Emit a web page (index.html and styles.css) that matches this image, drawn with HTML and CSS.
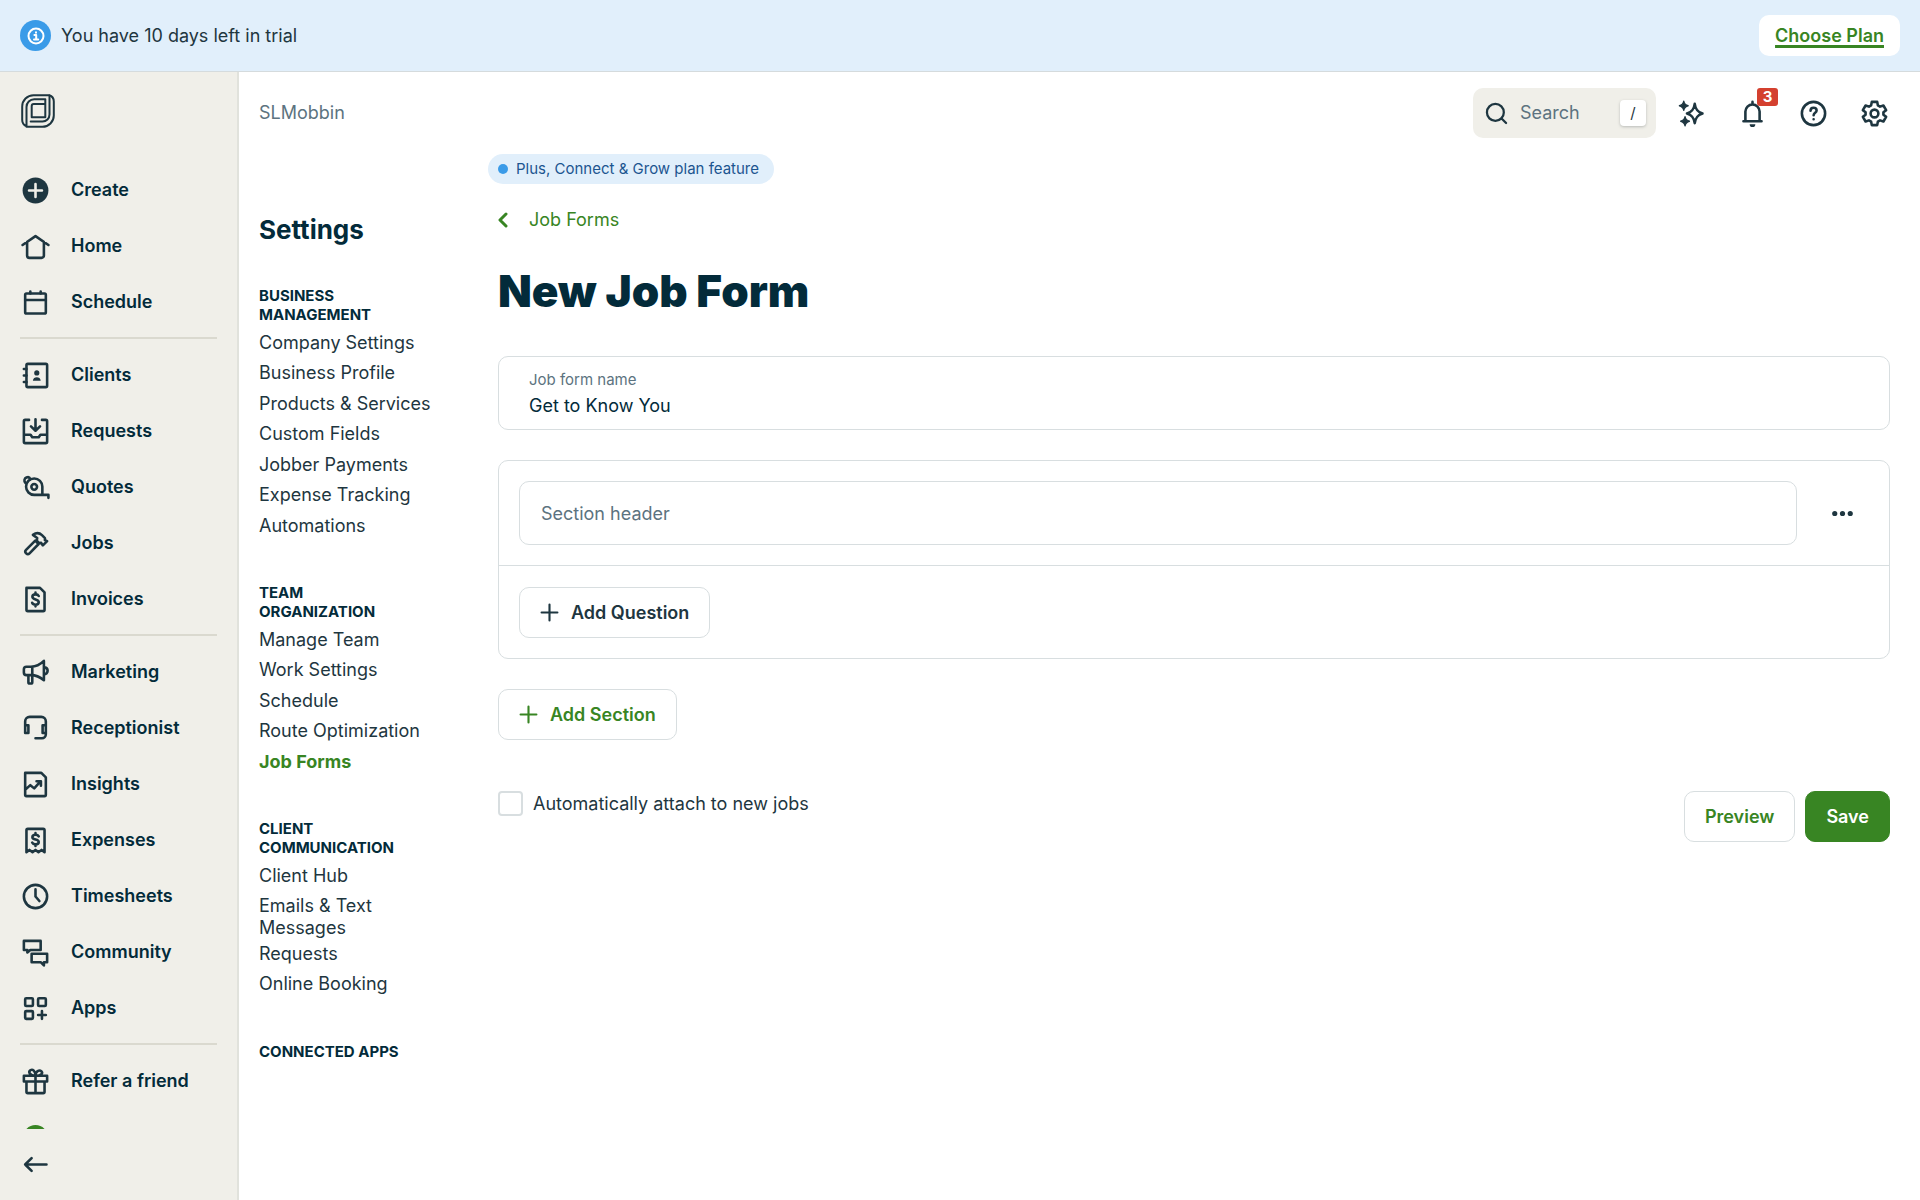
FILE: index.html
```html
<!DOCTYPE html>
<html lang="en">

<head>
  <meta charset="utf-8">
  <meta name="viewport" content="width=device-width, initial-scale=1">
  <title>New Job Form</title>
  <link rel="stylesheet" href="styles.css">
</head>

<body>

  <div class="trial-banner">
    <span class="trial-icon">
      <svg viewBox="0 0 18 18"><circle cx="9" cy="9" r="7.5"/><path d="M7.4 8h1.8v4.6M7 12.6h4.2"/><path d="M9 5.2v.6"/></svg>
    </span>
    <p class="trial-text">You have 10 days left in trial</p>
    <a class="trial-plan" href="#">Choose Plan</a>
  </div>

  <div class="app">

    <aside class="sidebar">
      <a class="logo" href="#" aria-label="Dashboard">
        <svg viewBox="0 0 34 34">
          <path d="M5.5 32.3C2.5 31 1.2 29 1.2 26V12.500A11.300 11.300 0 0 1 12.500 1.200H28.200C31 2 32.800 4 32.800 7.500V21.500A11.300 11.300 0 0 1 21.500 32.800H5.500V13A7.700 7.700 0 0 1 13.200 5.300H24.300V23.300H10.700V12A2 2 0 0 1 12.700 10H24"/>
          <path d="M28.500 1.500V20.500A7 7 0 0 1 21.500 27.500H9.700"/>
        </svg>
      </a>

      <nav class="menu">
        <a class="menu-item" href="#">
          <svg class="icon" viewBox="0 0 24 24"><circle class="solid" cx="12" cy="12" r="10"/><path class="plus-cut" d="M12 7v10M7 12h10"/></svg>
          Create
        </a>
        <a class="menu-item" href="#">
          <svg class="icon" viewBox="0 0 24 24"><path d="M2 10.800L12 4l10 6.800M5.500 8.600V19a1.800 1.800 0 0 0 1.800 1.800h9.400a1.800 1.800 0 0 0 1.800-1.800V8.600"/></svg>
          Home
        </a>
        <a class="menu-item" href="#">
          <svg class="icon" viewBox="0 0 24 24"><rect x="4" y="5" width="16" height="15.500" rx="1"/><path d="M4 10h16M8 3.500V5M16 3.500V5"/></svg>
          Schedule
        </a>
        <hr class="menu-line">
        <a class="menu-item" href="#">
          <svg class="icon" viewBox="0 0 24 24"><rect x="5" y="3" width="16" height="18" rx="1"/><path d="M3 7h2M3 12h2M3 17h2"/><circle class="solid" cx="13" cy="10" r="2"/><path class="solid" d="M10 16c0-3.500 6-3.500 6 0z"/></svg>
          Clients
        </a>
        <a class="menu-item" href="#">
          <svg class="icon" viewBox="0 0 24 24"><path d="M7 3H4a1 1 0 0 0-1 1v16a1 1 0 0 0 1 1h16a1 1 0 0 0 1-1V4a1 1 0 0 0-1-1h-3M12 2.500V11M8.500 8l3.500 3.400L15.500 8M3 14.500h5.200l1.300 2h5l1.300-2H21"/></svg>
          Requests
        </a>
        <a class="menu-item" href="#">
          <svg class="icon" viewBox="0 0 24 24"><path d="M22 20v-2.300H11a6.300 6.300 0 0 1-6.300-6.300C4.700 7.500 7.500 5 11 5a6.300 6.300 0 0 1 6.300 6.300v6"/><circle cx="11" cy="11.500" r="2.200"/><path d="M4.300 8.500C2.800 7 3.300 5 5 4.300c1.200-.5 2.500 0 3 1.200"/></svg>
          Quotes
        </a>
        <a class="menu-item" href="#">
          <svg class="icon" viewBox="0 0 24 24"><path d="M11.800 9.800l2.600 2.600-7 7.200a1.850 1.850 0 0 1-2.700-2.600zM10 5.300C12.500 3.500 15 3.600 17 5.500l2.300 2.300v1.600l1.700.8-3.300 3.300-1.300-2-1.600.2-1.800-1.800.3-2.200z"/></svg>
          Jobs
        </a>
        <a class="menu-item" href="#">
          <svg class="icon" viewBox="0 0 24 24"><path d="M5 3h10.500L19 6.500V20a1 1 0 0 1-1 1H6a1 1 0 0 1-1-1zM14.500 9.300c-.5-1-1.400-1.300-2.500-1.300-1.300 0-2.400.6-2.400 1.900 0 2.700 4.900 1.400 4.900 4.100 0 1.300-1.100 2-2.500 2-1.200 0-2.200-.5-2.600-1.500M12 6.700V8M12 16v1.300"/></svg>
          Invoices
        </a>
        <hr class="menu-line">
        <a class="menu-item" href="#">
          <svg class="icon" viewBox="0 0 24 24"><path d="M8.500 7.500H5a2 2 0 0 0-2 2V12a2 2 0 0 0 2 2h3.500c4 0 7 1.500 10 4V3c-3 3-6 4.500-10 4.500zM9.500 7.500V14M6.500 14v5.500a1 1 0 0 0 1 1h1a1 1 0 0 0 1-1V14M18.500 8c1.800 0 2.900 1.200 2.900 2.700s-1.100 2.800-2.900 2.800"/></svg>
          Marketing
        </a>
        <a class="menu-item" href="#">
          <svg class="icon" viewBox="0 0 24 24"><path d="M4 15.500V6.500a3.500 3.500 0 0 1 3.500-3.500h9A3.500 3.500 0 0 1 20 6.500v10a3 3 0 0 1-3 3h-5M4 9.500h2.500v6H4M20 9.500h-2.500v6H20"/></svg>
          Receptionist
        </a>
        <a class="menu-item" href="#">
          <svg class="icon" viewBox="0 0 24 24"><path d="M4 3h12.500L20 6.500V20a1 1 0 0 1-1 1H5a1 1 0 0 1-1-1zM4 16l4-3.500 3 2.500 4.500-5M12.800 9.500h3.400V13"/></svg>
          Insights
        </a>
        <a class="menu-item" href="#">
          <svg class="icon" viewBox="0 0 24 24"><path d="M5 21V4a1 1 0 0 1 1-1h12a1 1 0 0 1 1 1v17l-2.300-1.700L14.300 21 12 19.300 9.700 21l-2.400-1.700zM14.500 8.800c-.5-1-1.400-1.300-2.500-1.300-1.300 0-2.400.6-2.400 1.900 0 2.500 4.900 1.200 4.900 3.700 0 1.300-1.100 1.900-2.500 1.900-1.200 0-2.200-.5-2.600-1.400M12 6.300v1.200M12 15v1.200"/></svg>
          Expenses
        </a>
        <a class="menu-item" href="#">
          <svg class="icon" viewBox="0 0 24 24"><circle cx="12" cy="12" r="9"/><path d="M12 6.500V12l3 3.500"/></svg>
          Timesheets
        </a>
        <a class="menu-item" href="#">
          <svg class="icon" viewBox="0 0 24 24"><path d="M3 3h13v7h-8l-2.300 2V10H3zM9 13h12v6.500h-2.500V22l-2.500-2.500H9z"/></svg>
          Community
        </a>
        <a class="menu-item" href="#">
          <svg class="icon" viewBox="0 0 24 24"><rect x="4" y="4" width="6" height="6" rx=".8"/><rect x="14" y="4" width="6" height="6" rx=".8"/><rect x="4" y="14" width="6" height="6" rx=".8"/><path d="M17 14v6M14 17h6"/></svg>
          Apps
        </a>
        <hr class="menu-line">
        <a class="menu-item" href="#">
          <svg class="icon" viewBox="0 0 24 24"><path d="M3 7.500h18V12H3zM5 12v8a1 1 0 0 0 1 1h12a1 1 0 0 0 1-1v-8M12 7.500V21M12 7.500C7 7.500 6.500 4.500 8 3.300c1.800-1.200 4 .5 4 4.200zM12 7.500c5 0 5.800-2.300 4.500-3.500C15 2.800 12 4 12 7.500z"/></svg>
          Refer a friend
        </a>
        <a class="menu-item" href="#" aria-label="Profile"><span class="avatar"></span></a>
      </nav>

      <button class="collapse" type="button" aria-label="Collapse menu">
        <svg class="icon" viewBox="0 0 24 24"><path d="M20.500 12H4M9 7l-5 5 5 5"/></svg>
      </button>
    </aside>

    <div class="page">

      <header class="topbar">
        <span class="account">SLMobbin</span>
        <label class="search">
          <svg class="icon" viewBox="0 0 24 24"><circle cx="11" cy="11" r="7.500"/><path d="M16.500 16.500L20.500 20.500"/></svg>
          <input type="text" placeholder="Search" aria-label="Search">
          <kbd>/</kbd>
        </label>
        <div class="tools">
          <button type="button" aria-label="Assistant">
            <svg class="icon" viewBox="0 0 24 24"><path d="M14.500 4.500c.6 4.200 2 6.200 6 7.500-4 1.300-5.400 3.300-6 7.500-.6-4.200-2-6.200-6-7.500 4-1.300 5.400-3.300 6-7.500z"/><path class="solid spark" d="M6 2.500c.4 2.200 1.200 3 3.400 3.500C7.200 6.500 6.400 7.300 6 9.500 5.600 7.300 4.800 6.500 2.600 6 4.800 5.500 5.600 4.700 6 2.500zM7 14.500c.4 2.200 1.200 3 3.400 3.500-2.200.5-3 1.300-3.400 3.500-.4-2.200-1.200-3-3.400-3.500 2.200-.5 3-1.300 3.400-3.500z"/></svg>
          </button>
          <button type="button" aria-label="Notifications">
            <svg class="icon" viewBox="0 0 24 24"><path d="M5 18h14M6.500 17.500V10.500a5.500 5.500 0 0 1 11 0v7M12 3v2"/><path class="solid" d="M9.800 20.300h4.400a2.200 2.200 0 0 1-4.400 0z"/></svg>
            <span class="count">3</span>
          </button>
          <button type="button" aria-label="Help">
            <svg class="icon" viewBox="0 0 24 24"><circle cx="12" cy="12" r="9"/><path d="M9.700 9.800c0-1.500 1-2.300 2.300-2.300s2.400.8 2.400 2.100c0 1.800-2.300 1.900-2.300 3.700M12.100 16.400v.1"/></svg>
          </button>
          <button type="button" aria-label="Settings">
            <svg class="icon" viewBox="0 0 24 24"><circle cx="12" cy="12" r="3"/><path d="M9.900 3h4.200l.5 2.700 1.700 1 2.600-.9L21 9.400l-2.100 1.700v1.800l2.100 1.700-2.100 3.600-2.600-.9-1.700 1-.5 2.700H9.900l-.5-2.700-1.700-1-2.600.9L3 14.600l2.100-1.700v-1.800L3 9.400l2.100-3.600 2.600.9 1.700-1z"/></svg>
          </button>
        </div>
      </header>

      <div class="columns">

        <nav class="settings">
          <h2>Settings</h2>
          <h3>Business Management</h3>
          <ul>
            <li><a href="#">Company Settings</a></li>
            <li><a href="#">Business Profile</a></li>
            <li><a href="#">Products &amp; Services</a></li>
            <li><a href="#">Custom Fields</a></li>
            <li><a href="#">Jobber Payments</a></li>
            <li><a href="#">Expense Tracking</a></li>
            <li><a href="#">Automations</a></li>
          </ul>
          <h3>Team Organization</h3>
          <ul>
            <li><a href="#">Manage Team</a></li>
            <li><a href="#">Work Settings</a></li>
            <li><a href="#">Schedule</a></li>
            <li><a href="#">Route Optimization</a></li>
            <li><a class="active" href="#">Job Forms</a></li>
          </ul>
          <h3>Client Communication</h3>
          <ul>
            <li><a href="#">Client Hub</a></li>
            <li><a href="#">Emails &amp; Text Messages</a></li>
            <li><a href="#">Requests</a></li>
            <li><a href="#">Online Booking</a></li>
          </ul>
          <h3>Connected Apps</h3>
        </nav>

        <main class="content">
          <span class="plan-badge">Plus, Connect &amp; Grow plan feature</span>

          <a class="back" href="#">
            <svg viewBox="0 0 10 16"><path d="M8 2L2 8l6 6"/></svg>
            Job Forms
          </a>

          <h1>New Job Form</h1>

          <form>
            <div class="name-field">
              <label for="form-name">Job form name</label>
              <input type="text" id="form-name" value="Get to Know You">
            </div>

            <section class="card">
              <div class="card-head">
                <input type="text" placeholder="Section header" aria-label="Section header">
                <button class="more" type="button" aria-label="Section options">
                  <svg class="icon" viewBox="0 0 24 24"><circle class="solid" cx="6" cy="12" r="2"/><circle class="solid" cx="12" cy="12" r="2"/><circle class="solid" cx="18" cy="12" r="2"/></svg>
                </button>
              </div>
              <div class="card-body">
                <button class="btn btn-dark" type="button">
                  <svg viewBox="0 0 18 18"><path d="M9 1.500v15M1.500 9h15"/></svg>
                  Add Question
                </button>
              </div>
            </section>

            <button class="btn" type="button">
              <svg viewBox="0 0 18 18"><path d="M9 1.500v15M1.500 9h15"/></svg>
              Add Section
            </button>

            <div class="form-footer">
              <label class="check">
                <input type="checkbox">
                Automatically attach to new jobs
              </label>
              <div class="actions">
                <button class="btn" type="button">Preview</button>
                <button class="btn btn-save" type="submit">Save</button>
              </div>
            </div>
          </form>
        </main>

      </div>
    </div>
  </div>

</body>

</html>
```
FILE: styles.css
```css
* {
  box-sizing: border-box;
}

body {
  margin: 0;
  height: 100vh;
  display: flex;
  flex-direction: column;
  overflow: hidden;
  font-family: Inter, "Liberation Sans", sans-serif;
  font-size: 18px;
  line-height: 22px;
  color: #1e3640;
  background: #fff;
}

h1,
h2,
h3,
p,
ul {
  margin: 0;
  padding: 0;
}

a {
  color: inherit;
  text-decoration: none;
}

button,
input {
  font: inherit;
  color: inherit;
}

button {
  padding: 0;
  border: none;
  background: none;
  cursor: pointer;
}

input::placeholder {
  color: #5c7380;
  opacity: 1;
}

svg {
  display: block;
  flex: none;
  fill: none;
  stroke: currentColor;
  stroke-width: 2;
  stroke-linecap: round;
  stroke-linejoin: round;
}

.icon {
  width: 31px;
  height: 31px;
}

.solid {
  fill: currentColor;
  stroke: none;
}

/* trial banner */

.trial-banner {
  flex: none;
  display: flex;
  align-items: center;
  gap: 10px;
  height: 72px;
  padding: 0 20px;
  border-bottom: 1px solid #d5dbdd;
  background: #e1effb;
}

.trial-icon {
  display: flex;
  align-items: center;
  justify-content: center;
  width: 31px;
  height: 31px;
  border-radius: 50%;
  color: #fff;
  background: #3a9be8;
}

.trial-icon svg {
  width: 18px;
  height: 18px;
}

.trial-plan {
  margin-left: auto;
  padding: 10px 16px;
  border-radius: 10px;
  font-weight: 600;
  line-height: 21px;
  color: #388523;
  background: #fff;
  text-decoration: underline;
  text-decoration-thickness: 3px;
  text-underline-offset: 3px;
  text-decoration-skip-ink: none;
}

.app {
  flex: 1;
  display: flex;
  min-height: 0;
}

/* sidebar */

.sidebar {
  flex: none;
  display: flex;
  flex-direction: column;
  width: 239px;
  border-right: 2px solid #e1e2dc;
  background: #f0efe9;
}

.logo {
  flex: none;
  padding: 22px 21px 34px;
}

.logo svg {
  width: 34px;
  height: 34px;
}

.menu {
  flex: 1;
  min-height: 0;
  padding: 0 20px;
  overflow: hidden;
}

.menu-item {
  display: flex;
  align-items: center;
  gap: 20px;
  height: 56px;
  font-weight: 600;
  color: #032b3a;
}

.menu-item .icon {
  color: #1e3640;
}

.plus-cut {
  stroke: #f0efe9;
}

.menu-line {
  height: 2px;
  margin: 7px 0 8px;
  border: none;
  background: #dad9cf;
}

.avatar {
  width: 25px;
  height: 25px;
  margin-left: 3px;
  border-radius: 50%;
  background: #388523;
}

.collapse {
  flex: none;
  height: 71px;
  padding: 0 20px;
}

/* top bar */

.page {
  flex: 1;
  min-width: 0;
  padding: 0 30px 0 20px;
}

.topbar {
  display: flex;
  align-items: center;
  height: 82px;
}

.account {
  margin-right: auto;
  color: #5c7380;
}

.search {
  display: flex;
  align-items: center;
  width: 183px;
  height: 50px;
  padding: 0 10px;
  border-radius: 10px;
  background: #f0efe9;
}

.search .icon {
  width: 27px;
  height: 27px;
}

.search input {
  flex: 1;
  min-width: 0;
  padding: 0 10px;
  border: none;
  background: none;
}

.search kbd {
  width: 26px;
  height: 26px;
  border-radius: 4px;
  font: inherit;
  font-size: 15px;
  line-height: 26px;
  text-align: center;
  background: #fff;
  box-shadow: 0 1px 3px #b9bcb8;
}

.tools {
  display: flex;
  gap: 30px;
  margin-left: 20px;
}

.tools button {
  position: relative;
}

.spark {
  stroke: currentColor;
  stroke-width: 1;
}

.count {
  position: absolute;
  top: -10px;
  left: 20px;
  width: 21px;
  height: 18px;
  border-radius: 3px;
  font-size: 15px;
  font-weight: 700;
  line-height: 18px;
  text-align: center;
  color: #fff;
  background: #d4402f;
}

/* settings list */

.columns {
  display: flex;
}

.settings {
  flex: none;
  width: 229px;
  padding-top: 61px;
}

.settings h2 {
  margin-bottom: 41px;
  font-size: 26px;
  font-weight: 700;
  line-height: 30px;
  color: #032b3a;
}

.settings h3 {
  padding-right: 80px;
  font-size: 15px;
  font-weight: 700;
  line-height: 19px;
  text-transform: uppercase;
  color: #032b3a;
}

.settings ul {
  padding: 8px 50px 38px 0;
  list-style: none;
}

.settings li {
  min-height: 30px;
  padding-bottom: 4px;
}

.settings li:nth-child(even) {
  min-height: 31px;
}

.settings .active {
  font-weight: 700;
  color: #388523;
}

/* job form */

.content {
  flex: 1;
  min-width: 0;
}

.plan-badge {
  display: flex;
  align-items: center;
  gap: 8px;
  width: fit-content;
  height: 30px;
  padding: 0 15px 0 10px;
  border-radius: 15px;
  font-size: 15px;
  color: #1c5590;
  background: #e1effb;
}

.plan-badge::before {
  content: "";
  width: 10px;
  height: 10px;
  border-radius: 50%;
  background: #3a9be8;
}

.back {
  display: flex;
  align-items: center;
  gap: 21px;
  width: fit-content;
  margin: 25px 0 0 10px;
  color: #388523;
}

.back svg {
  width: 10px;
  height: 16px;
  stroke-width: 3;
}

h1 {
  margin: 32px 0 37px 10px;
  font-size: 44px;
  font-weight: 900;
  line-height: 56px;
  color: #032b3a;
}

form {
  margin-left: 10px;
}

.name-field {
  height: 74px;
  padding: 12px 30px;
  border: 1px solid #d8dee0;
  border-radius: 10px;
}

.name-field label {
  display: block;
  font-size: 15px;
  color: #5c7380;
}

.name-field input {
  display: block;
  width: 100%;
  height: 28px;
  padding: 0;
  border: none;
  color: #032b3a;
}

.card {
  margin: 30px 0;
  border: 1px solid #d8dee0;
  border-radius: 10px;
}

.card-head {
  display: flex;
  align-items: center;
  padding: 20px;
  border-bottom: 1px solid #d8dee0;
}

.card-head input {
  flex: 1;
  min-width: 0;
  height: 64px;
  padding: 0 21px;
  border: 1px solid #d8dee0;
  border-radius: 10px;
}

.more {
  margin: 0 11px 0 30px;
}

.card-body {
  padding: 21px 20px 20px;
}

.btn {
  display: flex;
  align-items: center;
  gap: 12px;
  height: 51px;
  padding: 0 20px;
  border: 1px solid #d8dee0;
  border-radius: 10px;
  font-weight: 600;
  color: #388523;
  background: #fff;
}

.btn svg {
  width: 19px;
  height: 19px;
}

.btn-dark {
  color: #1e3640;
}

.btn-save {
  border-color: #388523;
  color: #fff;
  background: #388523;
}

.form-footer {
  display: flex;
  align-items: flex-start;
  justify-content: space-between;
  margin-top: 51px;
}

.check {
  display: flex;
  align-items: center;
  gap: 10px;
}

.check input {
  appearance: none;
  width: 25px;
  height: 25px;
  margin: 0;
  border: 2px solid #d8dee0;
  border-radius: 4px;
}

.actions {
  display: flex;
  gap: 10px;
}
```
